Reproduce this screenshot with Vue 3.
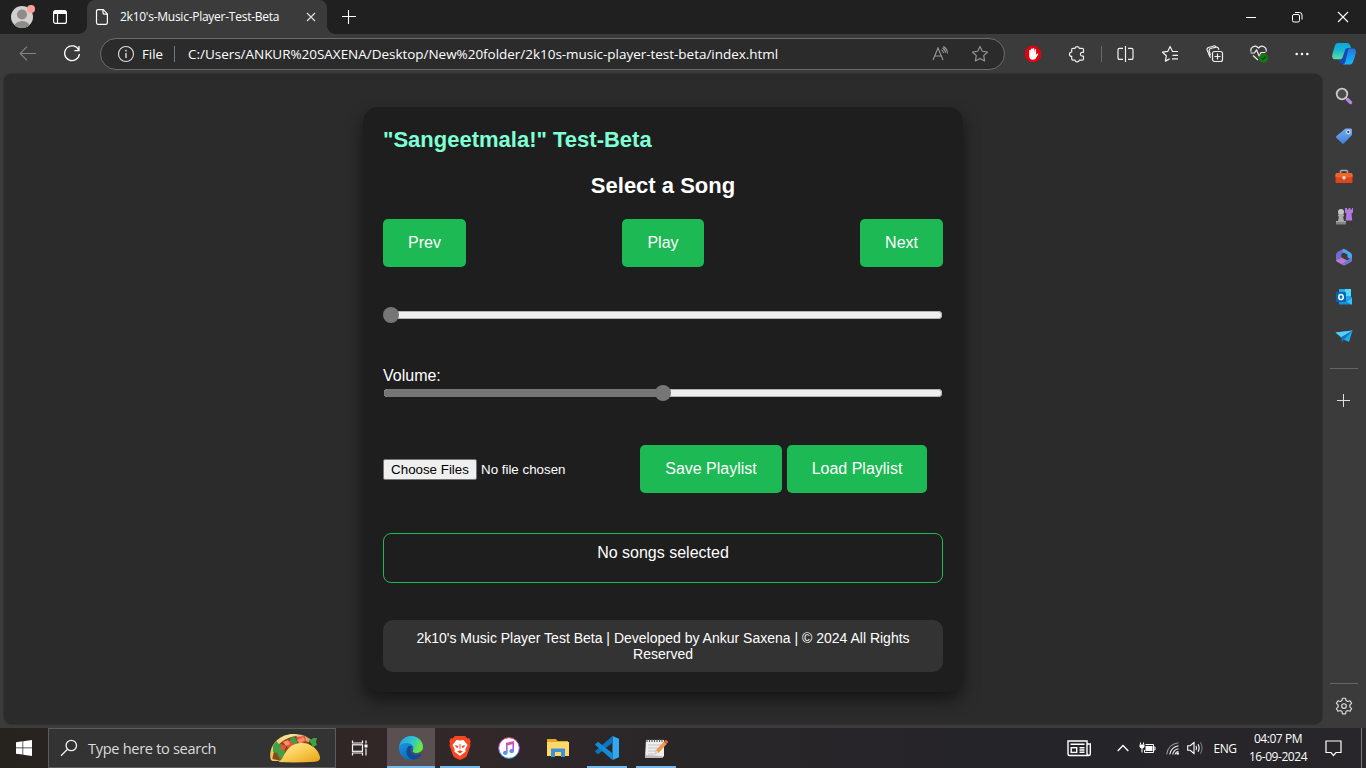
<script setup>
import { ref } from 'vue'

const controls = ['Prev', 'Play', 'Next']
const progress = ref(0)
const volume = ref(50)
const thumbLeft = (v) => `calc((100% - 16px) * ${v / 100})`
const fillWidth = (v) => `${v}%`
</script>

<template>
  <div class="desktop">
    <header class="tabbar">
      <div class="profile">
        <svg width="26" height="26" viewBox="0 0 26 26">
          <defs><clipPath id="av"><circle cx="12" cy="14" r="11" /></clipPath></defs>
          <circle cx="12" cy="14" r="11" fill="#d2d0ce" />
          <g clip-path="url(#av)" fill="#8f8b88">
            <circle cx="12" cy="11.5" r="5" />
            <ellipse cx="12" cy="24" rx="8" ry="6" />
          </g>
          <circle cx="21" cy="6" r="4" fill="#ff9f9a" />
        </svg>
      </div>
      <div class="workspaces">
        <svg width="16" height="16" viewBox="0 0 16 16">
          <rect x="1.6" y="1.6" width="12.8" height="12.8" rx="2" fill="none" stroke="#fff" stroke-width="1.2" />
          <path d="M1.5 3.5a2 2 0 0 1 2-2h9a2 2 0 0 1 2 2V5h-13z" fill="#fff" />
          <path d="M5.5 5v9.5" stroke="#fff" stroke-width="1.2" />
        </svg>
      </div>
      <div class="tab">
        <svg class="page-icon" width="14" height="18" viewBox="0 0 14 18" fill="none" stroke="#fff" stroke-width="1.2">
          <path d="M3 1.6h5.2L12.400 5.900V14.800a1.500 1.500 0 0 1-1.500 1.500H3a1.500 1.500 0 0 1-1.500-1.500V3.100A1.500 1.500 0 0 1 3 1.600z" />
          <path d="M8 1.800v3a1.300 1.300 0 0 0 1.300 1.300h3" />
        </svg>
        <span class="tab-title">2k10's-Music-Player-Test-Beta</span>
        <svg class="tab-close" width="10" height="10" viewBox="0 0 10 10"><path d="M1 1l8 8M9 1L1 9" stroke="#ddd" stroke-width="1.200" /></svg>
      </div>
      <svg class="newtab" width="14" height="14" viewBox="0 0 14 14"><path d="M6.500 0v14M0 6.500h14" stroke="#fff" stroke-width="1.100" /></svg>
      <div class="window-buttons">
        <span><svg width="12" height="12" viewBox="0 0 12 12"><path d="M1 6.500h10" stroke="#fff" /></svg></span>
        <span><svg width="12" height="12" viewBox="0 0 12 12" fill="none" stroke="#fff"><rect x="1.500" y="3.500" width="7" height="7.500" rx="1.500" /><path d="M4 1.500h4.500a2.500 2.500 0 0 1 2.500 2.500V8.500" /></svg></span>
        <span><svg width="12" height="12" viewBox="0 0 12 12"><path d="M1 1l10 10M11 1L1 11" stroke="#fff" stroke-width="1.100" /></svg></span>
      </div>
    </header>

    <div class="toolbar">
      <div class="nav-btn">
        <svg width="18" height="16" viewBox="0 0 18 16" fill="none" stroke="#838383" stroke-width="1.100"><path d="M17 7.500H1.500M8 .7L1.200 7.500 8 14.300" /></svg>
      </div>
      <div class="nav-btn reload">
        <svg width="18" height="18" viewBox="0 0 18 18" fill="none" stroke="#fff" stroke-width="1.300"><path d="M15.800 5.200A7.400 7.400 0 1 0 16.400 9M16 1v4.600h-4.600" /></svg>
      </div>
      <div class="address">
        <svg class="info" width="18" height="18" viewBox="0 0 18 18" fill="none" stroke="#dedede" stroke-width="1.100"><circle cx="9" cy="9" r="7.500" /><path d="M9 8v5" stroke-width="1.400" /><circle cx="9" cy="5.700" r=".9" fill="#dedede" stroke="none" /></svg>
        <span class="file">File</span>
        <i class="bar"></i>
        <span class="url">C:/Users/ANKUR%20SAXENA/Desktop/New%20folder/2k10s-music-player-test-beta/index.html</span>
        <svg class="read" width="17" height="16" viewBox="0 0 17 16" fill="none" stroke="#999" stroke-width="1.100"><path d="M1 14L6 2l5 12M2.900 10h6.200M9.300 3.800a3.500 3.500 0 0 1 2.200 3.200M10.500 1.800a6 6 0 0 1 3 5M11.300.5a8 8 0 0 1 4.200 7" /></svg>
        <svg class="star" width="18" height="18" viewBox="0 0 18 18" fill="none" stroke="#999" stroke-width="1.100" stroke-linejoin="round"><path d="M9 1.500l2.300 4.700 5.200.8-3.800 3.600.9 5.300L9 13.500l-4.600 2.400.9-5.300L1.500 7l5.200-.8z" /></svg>
      </div>
      <div class="actions">
        <span class="slot w44">
          <svg width="18" height="18" viewBox="0 0 18 18"><path d="M5.500 1h7L17 5.500v7L12.500 17h-7L1 12.500v-7z" fill="#e1000f" /><path d="M5.200 9V5.200a.8.800 0 0 1 1.500 0V8l.2-4a.8.800 0 0 1 1.500 0V8l.2-4.600a.8.800 0 0 1 1.500 0L10.300 8l.3-3.200a.75.750 0 0 1 1.500 0v5l1-1.100c.6-.6 1.500-.1 1.100.6l-2 3.500c-.6 1.300-1.700 2-3.200 2-2.400 0-3.800-1.500-3.800-3.800z" fill="#fff" /></svg>
        </span>
        <span class="slot w44">
          <svg width="18" height="18" viewBox="0 0 18 18" fill="none" stroke="#eee" stroke-width="1.200" stroke-linejoin="round"><path d="M7 3.300a2.200 2.200 0 0 1 4.300 0h2.900a1.300 1.300 0 0 1 1.300 1.300v2.700h-1.200a1.900 1.900 0 0 0 0 3.800h1.200v2.700a1.300 1.300 0 0 1-1.300 1.300h-2.900a2.200 2.200 0 0 1-4.300 0H5a1.300 1.300 0 0 1-1.300-1.300v-2.400a2.200 2.200 0 0 1 0-4.400V4.600A1.300 1.300 0 0 1 5 3.300z" /></svg>
        </span>
        <i class="sep"></i>
        <span class="slot w44">
          <svg width="18" height="18" viewBox="0 0 18 18" fill="none" stroke="#f2f2f2" stroke-width="1.200"><path d="M9.500 1v16M7 3.400H3.500A1.500 1.500 0 0 0 2 4.900v8a1.500 1.500 0 0 0 1.500 1.500H7M12 3.400h3.500A1.500 1.500 0 0 1 17 4.900v8a1.500 1.500 0 0 1-1.500 1.500H12" /></svg>
        </span>
        <span class="slot w45">
          <svg width="18" height="18" viewBox="0 0 18 18" fill="none" stroke="#f2f2f2" stroke-width="1.200" stroke-linejoin="round"><path d="M17 6.500h-5.500l-2.400-5-2.400 4.900-5.200.8 3.800 3.600-.9 5.300 4.200-2.200M11.500 10.300H17M11 13.900h6" /></svg>
        </span>
        <span class="slot w45">
          <svg width="18" height="18" viewBox="0 0 18 18" fill="none" stroke="#eee" stroke-width="1.200"><rect x="6.500" y="6.500" width="10" height="10" rx="2" /><path d="M11.500 8.500v6M8.500 11.500h6M4.900 12.300a2 2 0 0 1-1.400-1.400L1.200 5a2 2 0 0 1 1.300-2.500L7.800 1a2 2 0 0 1 2.300 1.200M4.500 10.500L3.300 5.900a2 2 0 0 1 1.300-2.400l5.700-1.300a2 2 0 0 1 2.200 1.300l.3 1.300" /></svg>
        </span>
        <span class="slot w44">
          <svg width="20" height="20" viewBox="0 0 20 20" fill="none" stroke="#eee" stroke-width="1.200" stroke-linejoin="round"><path d="M2 7.700C1 3.600 6 .1 9.500 4c3.500-3.900 8.500-.4 7.600 3.700M4 11.500l5 4.500M1.500 9h4l2-3.200 2.700 6.500L12 8.500h4.500" /><circle cx="14.500" cy="14" r="4.600" fill="#107c10" stroke="none" /><path d="M12.500 14.100l1.400 1.300 2.700-2.900" stroke="#15350f" /></svg>
        </span>
        <span class="slot w42">
          <svg width="14" height="4" viewBox="0 0 14 4" fill="#fff"><circle cx="1.700" cy="2" r="1.250" /><circle cx="7" cy="2" r="1.250" /><circle cx="12.300" cy="2" r="1.250" /></svg>
        </span>
        <span class="slot w42">
          <svg width="24" height="24" viewBox="0 0 24 24">
            <defs>
              <linearGradient id="cp1" x1="0" y1="0" x2="0" y2="1"><stop offset="0" stop-color="#08a8dc" /><stop offset=".4" stop-color="#18b4d0" /><stop offset="1" stop-color="#62dca0" /></linearGradient>
              <linearGradient id="cp2" x1="0" y1="0" x2="0" y2="1"><stop offset="0" stop-color="#2377dc" /><stop offset="1" stop-color="#12b9fc" /></linearGradient>
            </defs>
            <path d="M8 15l6-9h5l-7 16.500H10.500C8 22.500 7.500 18 6 17z" fill="#1947b5" />
            <path d="M6 1h9.500c2 0 2.800 2.200 3.500 5h-3c-2 0-2.600 1-3.300 3.200l-2 5.800C10 17 9 17.300 7 17.300H3.300C.3 17.300-.4 15 .6 11.500l2-7C3.300 2.200 4.200 1 6 1z" fill="url(#cp1)" />
            <path d="M17.500 6.500h3.300c3 0 3.700 2.500 2.700 6l-2 6.300c-.8 2.400-1.700 3.700-3.500 3.700h-7c1.500-.4 1.900-1.300 2.500-3.200l2.300-9.500c.5-2 .6-3.300 1.700-3.300z" fill="url(#cp2)" />
          </svg>
        </span>
      </div>
    </div>

    <div class="browser-body">
      <main class="viewport">
        <section class="player">
          <h1>"Sangeetmala!" Test-Beta</h1>
          <h2>Select a Song</h2>
          <div class="controls">
            <button v-for="c in controls" :key="c" class="btn">{{ c }}</button>
          </div>
          <div class="slider progress">
            <div class="track"><div class="fill" :style="{ width: fillWidth(progress) }"></div></div>
            <div class="thumb" :style="{ left: thumbLeft(progress) }"></div>
          </div>
          <div class="vol-label">Volume:</div>
          <div class="slider">
            <div class="track"><div class="fill" :style="{ width: fillWidth(volume) }"></div></div>
            <div class="thumb" :style="{ left: thumbLeft(volume) }"></div>
          </div>
          <div class="files">
            <button class="choose">Choose Files</button>
            <span class="nofile">No file chosen</span>
            <div class="playlist-btns">
              <button class="btn save">Save Playlist</button>
              <button class="btn load">Load Playlist</button>
            </div>
          </div>
          <div class="songs">No songs selected</div>
          <footer>2k10's Music Player Test Beta | Developed by Ankur Saxena | © 2024 All Rights Reserved</footer>
        </section>
      </main>

      <aside class="sidebar">
        <span class="side"><svg width="18" height="18" viewBox="0 0 18 18"><path d="M11 11l2 2" stroke="#999" stroke-width="2" /><path d="M12.500 12.500l3 3" stroke="#b583e8" stroke-width="3.400" stroke-linecap="round" /><circle cx="7" cy="7" r="5.300" fill="#4b4b4b" stroke="#c9c9c9" stroke-width="1.800" /></svg></span>
        <span class="side"><svg width="18" height="18" viewBox="0 0 18 18"><defs><linearGradient id="tg" x1="0" y1="0" x2="0" y2="1"><stop offset="0" stop-color="#72adf5" /><stop offset="1" stop-color="#4380db" /></linearGradient></defs><path d="M10.500 1.500H16l1 1V8L9 16.300c-.7.700-1.300.7-2 0L1.500 11c-.7-.7-.7-1.300 0-2z" fill="url(#tg)" /><circle cx="13.300" cy="5" r="1.700" fill="#345" stroke="#e6e6e6" stroke-width="1.100" /></svg></span>
        <span class="side"><svg width="18" height="18" viewBox="0 0 18 18"><path d="M5.500 6V4.500Q5.500 3.500 6.500 3.500h5q1 0 1 1V6" fill="none" stroke="#aaa" stroke-width="1.500" /><rect x=".5" y="6" width="17" height="10" rx="1.500" fill="#dc4517" /><path d="M.5 10V7.500A1.500 1.500 0 0 1 2 6h14a1.500 1.500 0 0 1 1.500 1.500V10l-8.500 1z" fill="#f2642b" /><rect x="7.500" y="9" width="3" height="3.500" rx="1.200" fill="#d8d8d8" /></svg></span>
        <span class="side"><svg width="18" height="20" viewBox="0 0 18 20"><path d="M10 2h2v1.500h1.500V2h2v1.500H17V2h1v4.500l-1.500 1 .7 7h-6.500l.8-7L10 6.500z" fill="#b27ae0" /><circle cx="6" cy="6" r="3" fill="#c4c4c4" /><path d="M3 8.500h6v2H8L9 15H3l1-4.500H3zM1 15h10v3H1z" fill="#aaa" /><path d="M1 16h10v2.500H1z" fill="#838383" /></svg></span>
        <span class="side"><svg width="18" height="18" viewBox="0 0 18 18"><path d="M8.500.7L2.500 4Q1 5 1 6.500V12l5.300-2.500V6L12.500 2.500z" fill="#736bd5" /><path d="M8.500.7l6.500 3.500q2 1 2 3v5l-4.500-3V6.500L7 3.500z" fill="#4ba8e4" /><path d="M1 12l5.500-2.500 5.800 3L17 9.500v2.800q0 .9-1 1.500l-5.800 3.300q-1.200.6-2.400 0L2 13.800q-1-.6-1-1.800z" fill="#b97cd0" /><path d="M12.300 12.500L17 9.300v3.300q0 .6-1 1.200l-5.800 3.300q-2.200.7-3.800-1z" fill="#6679da" /></svg></span>
        <span class="side"><svg width="18" height="18" viewBox="0 0 18 18"><path d="M4 1h12v14H4z" fill="#28a8ea" /><path d="M10 1h6v7h-6z" fill="#50d9ff" /><path d="M4 9l6.500 4L17 8.500v7q0 1-1 1H5q-1 0-1-1z" fill="#1591dd" /><path d="M17 10l-5.500 3.500 5 3H17z" fill="#36c4fa" /><rect x="1" y="4" width="10" height="10" rx="1.200" fill="#0067b8" /><ellipse cx="6" cy="9" rx="2.200" ry="2.600" fill="none" stroke="#fff" stroke-width="1.500" /></svg></span>
        <span class="side"><svg width="18" height="18" viewBox="0 0 18 18"><path d="M.5 4.500L17.500 2.500 14 14 7.500 11z" fill="#24a8e9" /><path d="M.5 4.500L17.500 2.500 6.500 9z" fill="#59ccfa" /><path d="M6.500 9L17.500 2.500 9 11.500 6.700 14.500z" fill="#1277bd" /></svg></span>
        <i class="side-line"></i>
        <span class="side plus"><svg width="13" height="13" viewBox="0 0 13 13"><path d="M6.500 0v13M0 6.500h13" stroke="#dfdfdf" /></svg></span>
        <i class="side-line bottom"></i>
        <span class="side gear"><svg width="18" height="18" viewBox="0 0 18 18" fill="none" stroke="#ddd" stroke-width="1.150" stroke-linejoin="round"><circle cx="9" cy="9" r="2.300" /><path d="M7.500 1.200h3l.6 2.400 1.500.9 2.400-.8 1.600 2.700L14.800 8.200v1.600l1.800 1.800-1.600 2.700-2.400-.8-1.500.9-.6 2.400h-3l-.6-2.400-1.500-.9-2.400.8-1.600-2.700L3.200 9.800V8.200L1.400 6.400 3 3.700l2.400.8 1.500-.9z" /></svg></span>
      </aside>
    </div>

    <nav class="taskbar">
      <span class="start"><svg width="16" height="16" viewBox="0 0 16 16" fill="#fff"><path d="M0 2.200l6.500-.9v6.200H0zM7.200 1.200L16 0v7.500H7.200zM0 8.300h6.500v6.300L0 13.700zM7.200 8.300H16V16l-8.800-1.200z" /></svg></span>
      <div class="search">
        <svg class="lens" width="18" height="18" viewBox="0 0 18 18" fill="none" stroke="#f0f0f0" stroke-width="1.300"><circle cx="11.300" cy="6.500" r="5.200" /><path d="M7.500 10.300L1 16.800" /></svg>
        <span class="ph">Type here to search</span>
        <svg class="taco" width="52" height="30" viewBox="0 0 52 30">
          <defs>
            <linearGradient id="tc" x1="0" y1="0" x2="1" y2="1"><stop offset="0" stop-color="#fff1ae" /><stop offset=".45" stop-color="#fad15a" /><stop offset="1" stop-color="#eaa012" /></linearGradient>
            <linearGradient id="tb" x1="0" y1="0" x2="1" y2="0"><stop offset="0" stop-color="#f0c35c" /><stop offset=".5" stop-color="#fbe3a3" /><stop offset="1" stop-color="#c99a58" /></linearGradient>
          </defs>
          <path d="M1.500 26C-1 12 11 1 24 1c8 0 14 2 18 6L20 28H5c-2 0-3-.5-3.500-2z" fill="url(#tb)" />
          <path d="M3.500 26C4 14 14 5 27 3l14 7L12 28z" fill="#8b4a1c" />
          <path d="M7 16l5-5 5 2-2 6-6 2zM16 9l7-2 3 5-7 3zM27 4l9-1 1 5-6 4z" fill="#ee5135" />
          <path d="M4 13l3-5 3 3 3 1-2 4 5 2-1 5-4 3-3-6-4-1zM21 6l4-3 2 4 2 1-3 4-4-3zM40 7l3-1 1-1 4 0-1 4 1 3-4 2z" fill="#40a044" />
          <path d="M14 9l5-2 2 4-4 2zM28 7l6-3 2 3-5 4z" fill="#ff8b69" />
          <path d="M9 29c7-2 6-18 23-19 11-.5 18 8 19 14 .5 3-2 4.500-5 4.700Q27 30 9 29z" fill="url(#tc)" />
        </svg>
      </div>
      <span class="taskview"><svg width="18" height="18" viewBox="0 0 18 18" fill="none" stroke="#f4f4f4" stroke-width="1.200"><path d="M1.500 1.500v2.500h10V1.500M1.500 16.500V14h10v2.500M15 1.500v3M15 9.500v7" /><rect x="1.500" y="5.800" width="10" height="6.500" /><rect x="13.500" y="5.500" width="3" height="3" fill="#fff" stroke="none" /></svg></span>
      <div class="apps">
        <span class="app active">
          <svg width="24" height="24" viewBox="0 0 24 24">
            <defs><linearGradient id="e1" x1="0" y1="0" x2="1" y2=".4"><stop offset="0" stop-color="#259ce5" /><stop offset=".6" stop-color="#30c7cc" /><stop offset="1" stop-color="#6be83f" /></linearGradient><linearGradient id="e2" x1="0" y1="0" x2=".6" y2="1"><stop offset="0" stop-color="#1aa1e5" /><stop offset="1" stop-color="#1063bd" /></linearGradient></defs>
            <circle cx="12" cy="12" r="12" fill="url(#e2)" />
            <path d="M.3 10.500C1.500 3.500 7 0 12 0c7 0 12 5.200 12 11 0 4-3 6-6.500 6-3.200 0-4.600-1.300-3.600-2.700C15.800 11 13 7 8 7 4 7 1.200 8.500.3 10.500z" fill="url(#e1)" />
            <path d="M9 11c-4 5.500-.3 11.500 5.500 12.700C19 23 22 20 23 17.300c-4.500 2.400-9.600 1.700-11-1.600-.8-1.900 0-4.100 1.300-5.100C12 9.300 10 9.500 9 11z" fill="#104a91" />
            <path d="M24.500 15.500L22.800 17.300c-4.300 2.300-9.300 1.700-10.800-1.600-.5-1.300-.2-2.700.6-3.800.9.6 1.700 1.400 1.300 2.400-1 1.400.4 2.700 3.600 2.700 2.500 0 4.700-1 5.800-2.900z" fill="#5b5051" />
          </svg>
        </span>
        <span class="app running">
          <svg width="22" height="24" viewBox="0 0 22 24"><path d="M6 0h10l2.500 2.500L20 2l1.700 3.300-.7 2 .5 2-3.500 10.200Q17 21 15.500 22L11 24l-4.500-2Q5 21 4 19.500L.5 9.300l.5-2-.7-2L2 2l1.500.5z" fill="#fb4721" /><path d="M7.500 4L11 4.600 14.500 4l4 5-2.300 4.500.5 2L13.500 18 11 20l-2.500-2-3.200-2.500.5-2L3.500 9z" fill="#fff" /><path d="M5.500 9l4 1-1.300 2.500zM16.500 9l-4 1 1.300 2.500zM8 15.500l3-1.200 3 1.200-3 2zM10.500 8h1v5h-1z" fill="#fb4721" /></svg>
        </span>
        <span class="app">
          <svg width="22" height="22" viewBox="0 0 22 22"><defs><linearGradient id="it" x1="0" y1="0" x2="0" y2="1"><stop offset="0" stop-color="#ee4f89" /><stop offset=".5" stop-color="#a35bea" /><stop offset="1" stop-color="#39aee8" /></linearGradient></defs><circle cx="11" cy="11" r="10.300" fill="#fff" stroke="url(#it)" stroke-width="1" /><path d="M8 5.800l8-1.800v10a2.300 2 0 1 1-1.600-1.800V7.300L9.600 8.400v7.400A2.300 2 0 1 1 8 14z" fill="url(#it)" /></svg>
        </span>
        <span class="app">
          <svg width="22" height="20" viewBox="0 0 22 20"><path d="M0 1h9l1.500 2H21v15H0z" fill="#e7a821" /><path d="M0 4h22v14H0z" fill="#ffd869" /><path d="M4 19v-8.500h14V19h-4v-5H8v5z" fill="#3d91d9" /></svg>
        </span>
        <span class="app running">
          <svg width="24" height="24" viewBox="0 0 24 24"><path d="M17.500 0L24 2.800v18.400L17.500 24z" fill="#32a8f0" /><path d="M17.500 0v6.800L3 18.200.3 16Q0 15.500.3 15z" fill="#0d75bd" /><path d="M17.500 24v-6.800L3 5.800.3 8Q0 8.500.3 9z" fill="#168bd5" /></svg>
        </span>
        <span class="app running">
          <svg width="24" height="22" viewBox="0 0 24 22"><path d="M2 3h18v16l-2 2H1z" fill="#eee" /><path d="M1 18l17 1v2H1z" fill="#bbb" /><path d="M4 8h13M4 11h11M4 14h9M4 17h8" stroke="#c4c4c4" /><path d="M3 2v3M5.500 2v3M8 2v3M10.500 2v3M13 2v3M15.500 2v3M18 2v3" stroke="#555" stroke-width="1.100" /><path d="M11 17l1-4 8-8.500 2.700 2.500-8 8.700z" fill="#e9994c" /><path d="M20 4.500l1.200-1.200q.8-.7 1.700.1l.7.700q.8.800 0 1.600L22.700 7z" fill="#e65d55" /><path d="M11 17l1-4 2.700 2.700z" fill="#e6d7bd" /></svg>
        </span>
      </div>
      <div class="tray">
        <span class="t news"><svg width="24" height="17" viewBox="0 0 24 17" fill="none" stroke="#fff" stroke-width="1.400"><path d="M20 14V1H1v13q0 1.500 1.500 1.500h19Q23.300 15.500 23.300 14V4H20M20 13q0 2 1.500 2" /><path d="M3.500 4.300h14M12.500 7.700h5M12.500 10h5M12.500 12.300h5" /><rect x="4.200" y="7.700" width="5.500" height="4.700" /></svg></span>
        <span class="t chev"><svg width="12" height="8" viewBox="0 0 12 8"><path d="M.7 7L6 1.500 11.300 7" fill="none" stroke="#fff" stroke-width="1.300" /></svg></span>
        <span class="t batt"><svg width="17" height="12" viewBox="0 0 17 12" fill="none" stroke="#fff"><path d="M6.500 2.500h8v8h-9V8M15 5h1v3h-1M1.500.5v2M4.500.5v2M3 6v4.500" /><path d="M.5 2.500h5v2q-.5 2-2.500 2t-2.500-2z" fill="#fff" stroke="none" /><rect x="6.500" y="4" width="7" height="5" fill="#fff" stroke="none" /></svg></span>
        <span class="t wifi"><svg width="14" height="13" viewBox="0 0 14 13" fill="none" stroke="#eee" stroke-width="1.100"><path d="M.7 12.500C1.500 6 6 1.500 12.500.7" stroke="#999" /><path d="M3.700 12.500C4.500 8 7.500 4.500 12.500 3.700M6.700 12.500c.5-3 2.500-5.300 5.800-5.800" /><path d="M9 12.500q.5-2.500 3.500-3.300" /><circle cx="11.700" cy="11.500" r="1.300" fill="#fff" stroke="none" /></svg></span>
        <span class="t vol"><svg width="17" height="14" viewBox="0 0 17 14" fill="none" stroke="#fff" stroke-width="1.100"><path d="M.7 4.700h2.500L7 1.500v11L3.200 9.300H.7zM9 5q1.200 2 0 4M11 3.200q2.300 3.800 0 7.600" /><path d="M13.300 1.300q3.600 5.700 0 11.400" stroke="#777" /></svg></span>
        <span class="t lang">ENG</span>
        <span class="t clock"><b>04:07 PM</b><b>16-09-2024</b></span>
        <span class="t note"><svg width="17" height="17" viewBox="0 0 17 17" fill="none" stroke="#fff" stroke-width="1.200"><path d="M1 1h15v11.500h-5L8.500 15.500 6 12.500H1z" /></svg></span>
        <i class="peek"></i>
      </div>
    </nav>
  </div>
</template>

<style>
body { margin: 0; background: #3b3b3b; overflow: hidden; }
</style>

<style scoped>
* { box-sizing: border-box; }
svg { display: block; flex: none; }
.desktop { width: 1366px; height: 768px; display: flex; flex-direction: column; overflow: hidden; background: #3b3b3b; font-family: "Open Sans", "Noto Sans", sans-serif; color: #fff; white-space: nowrap; }
.tabbar { height: 34px; display: flex; align-items: center; background: #202020; flex: none; }
.profile { width: 26px; margin-left: 10px; height: 28px; }
.workspaces { margin-left: 16px; width: 35px; }
.tab { position: relative; width: 240px; height: 34px; background: #3b3b3b; border-radius: 8px 8px 0 0; display: flex; align-items: center; }
.tab::before, .tab::after { content: ""; position: absolute; bottom: 0; width: 8px; height: 8px; }
.tab::before { left: -8px; background: radial-gradient(circle at 0 0, transparent 7.500px, #3b3b3b 8px); }
.tab::after { right: -8px; background: radial-gradient(circle at 100% 0, transparent 7.500px, #3b3b3b 8px); }
.page-icon { margin-left: 8px; }
.tab-title { margin-left: 11px; width: 186px; font-size: 12px; letter-spacing: -0.260px; line-height: 16px; }
.newtab { margin-left: 15px; }
.window-buttons { margin-left: auto; display: flex; }
.window-buttons span { width: 46px; display: flex; justify-content: center; }

.toolbar { height: 40px; display: flex; align-items: center; flex: none; }
.nav-btn { width: 44px; display: flex; justify-content: center; margin-left: 6px; }
.reload { margin-left: 0; }
.address { margin-left: 6px; width: 905px; height: 32px; border: 1px solid #6c6c6c; border-radius: 16px; background: #2b2b2b; display: flex; align-items: center; }
.info { margin-left: 16px; }
.file { margin-left: 7px; width: 32px; font-size: 13.300px; }
.bar { width: 1px; height: 16px; background: #777; }
.url { margin-left: 13px; width: 744px; font-size: 13.500px; letter-spacing: -0.030px; }
.star { margin-left: 22px; }
.actions { display: flex; align-items: center; margin-left: 6px; }
.slot { display: flex; justify-content: center; }
.w44 { width: 44px; } .w45 { width: 45px; } .w42 { width: 42px; }
.sep { width: 1px; height: 16px; margin: 0 1px 0 2px; background: #686868; }

.browser-body { height: 654px; display: flex; flex: none; }
.viewport { width: 1318px; height: 650px; margin-left: 4px; border-radius: 8px; background: #2b2b2b; box-shadow: 0 0 2px rgba(0, 0, 0, .5); overflow: hidden; display: flex; justify-content: center; padding-top: 33px; }
.player { width: 600px; height: 585px; padding: 20px; border-radius: 15px; background: #1e1e1e; box-shadow: 0 8px 16px rgba(0, 0, 0, .5); font-family: "Liberation Sans", Arial, sans-serif; font-size: 16px; display: flex; flex-direction: column; }
h1, h2 { margin: 0; font-size: 22px; line-height: 25px; height: 25px; font-weight: 700; }
h1 { color: #7fffd4; }
h2 { margin-top: 21px; text-align: center; }
.controls { margin-top: 21px; display: flex; justify-content: space-between; }
.btn { height: 48px; padding: 0 25px; border: 0; border-radius: 5px; background: #1db954; color: #fff; font: 16px "Liberation Sans", Arial, sans-serif; }
.slider { position: relative; height: 16px; display: flex; align-items: center; flex: none; }
.progress { margin-top: 40px; }
.track { height: 8px; width: 558px; margin-left: 1px; border-radius: 4px; background: #efefef; box-shadow: inset 0 0 0 1px #b2b2b2; overflow: hidden; }
.fill { height: 8px; background: #767676; }
.thumb { position: absolute; top: 0; width: 16px; height: 16px; border-radius: 8px; background: #767676; }
.vol-label { margin-top: 43px; height: 19px; line-height: 20px; }
.files { margin-top: 44px; height: 48px; display: flex; align-items: center; }
.choose { width: 94px; height: 21px; padding: 0; border: 1px solid #767676; border-radius: 2px; background: #efefef; color: #000; font: 13.333px "Liberation Sans", Arial, sans-serif; }
.nofile { margin-left: 4px; width: 159px; font-size: 13.333px; }
.playlist-btns { display: flex; gap: 5px; }
.save { width: 142px; }
.load { width: 140px; padding: 0; }
.songs { margin-top: 40px; height: 50px; border: 1px solid #1db954; border-radius: 8px; text-align: center; padding-top: 10px; line-height: 18px; }
footer { margin-top: 37px; height: 52px; padding: 10px; border-radius: 10px; background: #333; font-size: 14px; line-height: 16px; text-align: center; white-space: normal; }

.sidebar { width: 44px; height: 654px; padding-top: 2px; display: flex; flex-direction: column; align-items: center; }
.side { height: 40.150px; display: flex; align-items: center; flex: none; }
.side-line { width: 28px; height: 1px; margin-top: 11px; background: #666; flex: none; }
.plus { margin: 11px 1px 0 0; }
.bottom { margin-top: auto; }
.gear { height: 44px; }

.taskbar { height: 40px; display: flex; flex: none; background: linear-gradient(90deg, #26221e 0, #302625 25%, #32282a 34%, #292628 50%, #252429 75%, #282629 100%); }
.start { width: 48px; display: flex; align-items: center; justify-content: center; }
.search { width: 288px; border: 1px solid #5c5c5c; background: #333; display: flex; align-items: center; }
.lens { margin-left: 11px; }
.ph { margin-left: 10px; width: 181px; font-size: 14.600px; letter-spacing: -0.320px; color: #dcdcdc; }
.taskview { width: 48px; display: flex; align-items: center; justify-content: center; }
.apps { margin-left: 3px; display: flex; gap: 1px; }
.app { width: 48px; height: 40px; display: flex; align-items: center; justify-content: center; position: relative; }
.active { background: #5b5051; border-bottom: 2px solid #76b9ed; padding-top: 2px; }
.running::after { content: ""; position: absolute; left: 4px; right: 4px; bottom: 0; height: 2px; background: #76b9ed; }
.tray { margin-left: auto; display: flex; align-items: center; }
.t { display: flex; justify-content: center; align-items: center; flex: none; }
.news { width: 24px; margin-right: 26px; }
.chev { width: 12px; margin-right: 10px; }
.batt { width: 17px; margin-right: 10px; }
.wifi { width: 14px; margin-right: 7px; }
.vol { width: 17px; margin-right: 9px; }
.lang { width: 24px; font-size: 12px; letter-spacing: -0.400px; }
.clock { width: 82px; flex-direction: column; font-size: 12px; letter-spacing: -0.450px; }
.clock b { font-weight: 400; line-height: 18px; }
.note { width: 28px; }
.peek { width: 1px; height: 40px; margin: 0 4px 0 14px; background: #777; }
</style>
